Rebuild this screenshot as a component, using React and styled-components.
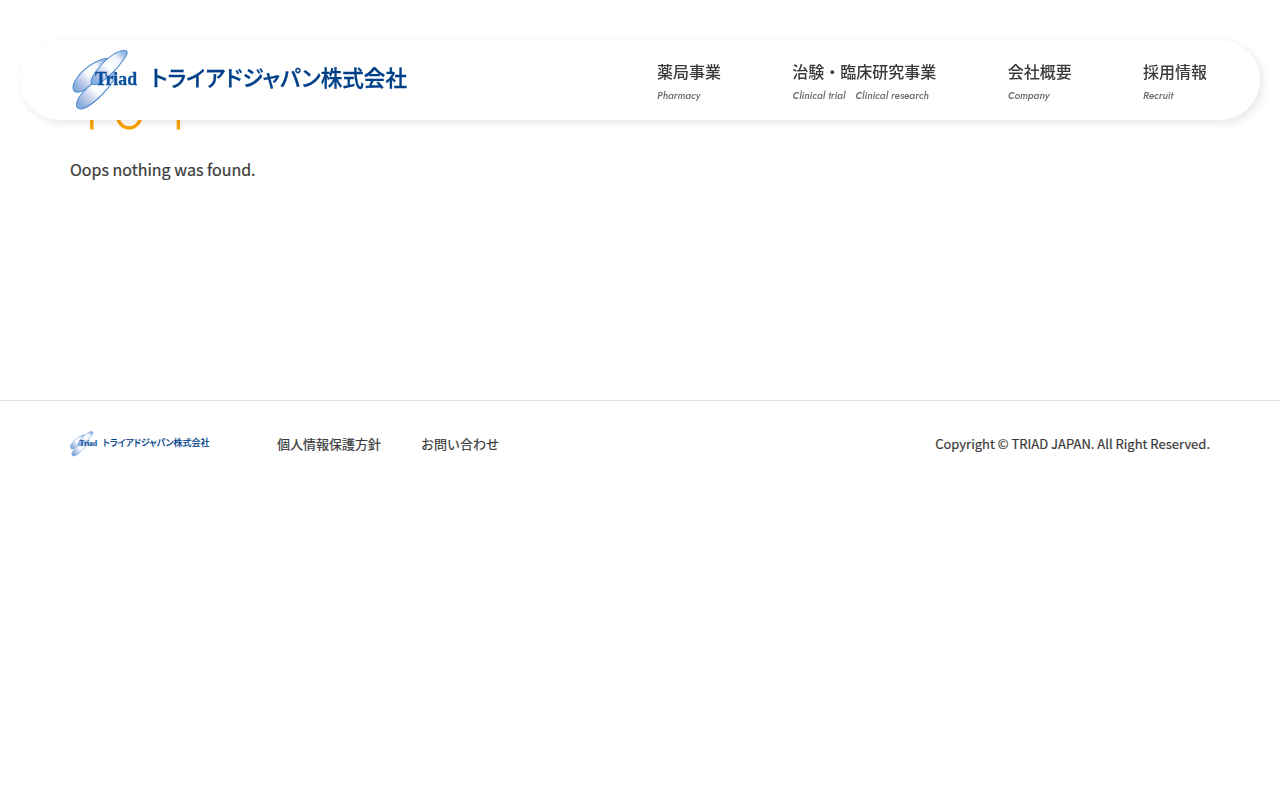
import React from "react";
import styled, { createGlobalStyle } from "styled-components";

const GlobalStyle = createGlobalStyle`
  * { box-sizing: border-box; }
  body {
    margin: 0;
    background: #fff;
    color: #3a3a3a;
    font-family: "Noto Sans CJK JP", sans-serif;
    font-weight: 400;
    font-size: 16px;
    -webkit-text-stroke: 0.2px;
  }
  a { color: inherit; text-decoration: none; }
`;

const Header = styled.header`
  position: fixed;
  z-index: 10;
  top: 40px;
  left: 20px;
  right: 20px;
  height: 80px;
  padding: 0 53px 0 50px;
  display: flex;
  justify-content: space-between;
  align-items: flex-start;
  background: #fff;
  border-radius: 40px;
  box-shadow: 3px 3px 10px rgba(0, 0, 0, 0.1);
  -webkit-text-stroke: 0;
`;

const LogoLink = styled.a`
  display: block;
  padding-top: ${(p) => p.$top || 0}px;
`;

const LogoSvg = styled.svg`
  display: block;
  width: ${(p) => p.$width}px;
  height: auto;
  overflow: visible;
  -webkit-text-stroke: 0;
`;

const Nav = styled.nav`
  display: flex;
  gap: 71.3px;
  padding-top: 19px;
`;

const NavItem = styled.a`
  display: block;
  font-size: 16px;
  font-weight: 500;
  line-height: 24px;
  white-space: pre;
`;

const NavSub = styled.span`
  display: block;
  height: 24px;
  width: 0;
  color: #6c6c6c;
  font: italic 500 10.15px/26px Jost, Futura, Lato, sans-serif;
`;

const Main = styled.main`
  height: 400px;
  padding: 64px 70px 0;
`;

const Title = styled.h1`
  margin: 0;
  height: 80px;
  padding-top: 4px;
  color: #fba200;
  font-family: Lato, sans-serif;
  font-size: 55px;
  font-weight: 300;
  line-height: 80px;
  letter-spacing: 11.3px;
  -webkit-text-stroke: 1px;
`;

const Message = styled.p`
  margin: 11px 0 0;
  line-height: 28px;
`;

const Footer = styled.footer`
  height: 85px;
  padding: 0 70px;
  display: flex;
  align-items: center;
  border-top: 1px solid #ddd;
  font-size: 13px;
`;

const FooterLinks = styled.div`
  display: flex;
  gap: 40px;
  margin-left: 67px;
`;

const Copyright = styled.small`
  margin-left: auto;
  font-size: 13px;
`;

function Logo({ id, width, viewBox }) {
  return (
    <LogoSvg $width={width} viewBox={viewBox} role="img" aria-label="Triad">
      <defs>
        <linearGradient id={id} x1="0.1" y1="0.9" x2="0.9" y2="0.1">
          <stop offset="0" stopColor="#86abdd" />
          <stop offset="0.28" stopColor="#cbd4ed" />
          <stop offset="0.5" stopColor="#ffffff" />
          <stop offset="0.8" stopColor="#f3f5fc" />
          <stop offset="1" stopColor="#9ab8e2" />
        </linearGradient>
      </defs>
      <g fill={`url(#${id})`} stroke="#4f8fd2" strokeWidth="1.1">
        <path d="M38 9.500C29 9 14 19 7 29C1 37 2 44 9 43C17 41 27 33 33 22Z" />
        <path d="M45 23C37 22 18 36 10 47C5 54 5 60.500 12 60C22 57 37 42 44 31C46 27 47 24 45 23Z" />
        <path d="M56.500 2C50 -1 36 9 27 21C21 29 18 36 25 35.500C33 34 46 22 54 10C57 6 58 3 56.500 2Z" />
      </g>
      <text x="25" y="36" fill="#0a509d" fontFamily="Liberation Serif, serif" fontWeight="700" fontSize="18" textLength="42" lengthAdjust="spacingAndGlyphs" stroke="#0a509d" strokeWidth="0.3">Triad</text>
      <text x="81" y="37" fill="#003f88" fontFamily="Noto Sans CJK JP, sans-serif" fontWeight="500" fontSize="22" textLength="256" lengthAdjust="spacingAndGlyphs" stroke="#003f88" strokeWidth="0.3" style={{ fontFeatureSettings: '"palt"' }}>トライアドジャパン株式会社</text>
    </LogoSvg>
  );
}

const navItems = [
  ["薬局事業", "Pharmacy"],
  ["治験・臨床研究事業", "Clinical trial　Clinical research"],
  ["会社概要", "Company"],
  ["採用情報", "Recruit"],
];

export default function App() {
  return (
    <>
      <GlobalStyle />
      <Header>
        <LogoLink href="#" $top={9}>
          <Logo id="petal-header" width={340} viewBox="0 0 340 62" />
        </LogoLink>
        <Nav>
          {navItems.map(([label, sub]) => (
            <NavItem href="#" key={label}>
              {label}
              <NavSub>{sub}</NavSub>
            </NavItem>
          ))}
        </Nav>
      </Header>
      <Main>
        <Title>404</Title>
        <Message>Oops nothing was found.</Message>
      </Main>
      <Footer>
        <LogoLink href="#" $top={1}>
          <Logo id="petal-footer" width={140} viewBox="2 0 336 62" />
        </LogoLink>
        <FooterLinks>
          <a href="#">個人情報保護方針</a>
          <a href="#">お問い合わせ</a>
        </FooterLinks>
        <Copyright>Copyright © TRIAD JAPAN. All Right Reserved.</Copyright>
      </Footer>
    </>
  );
}
